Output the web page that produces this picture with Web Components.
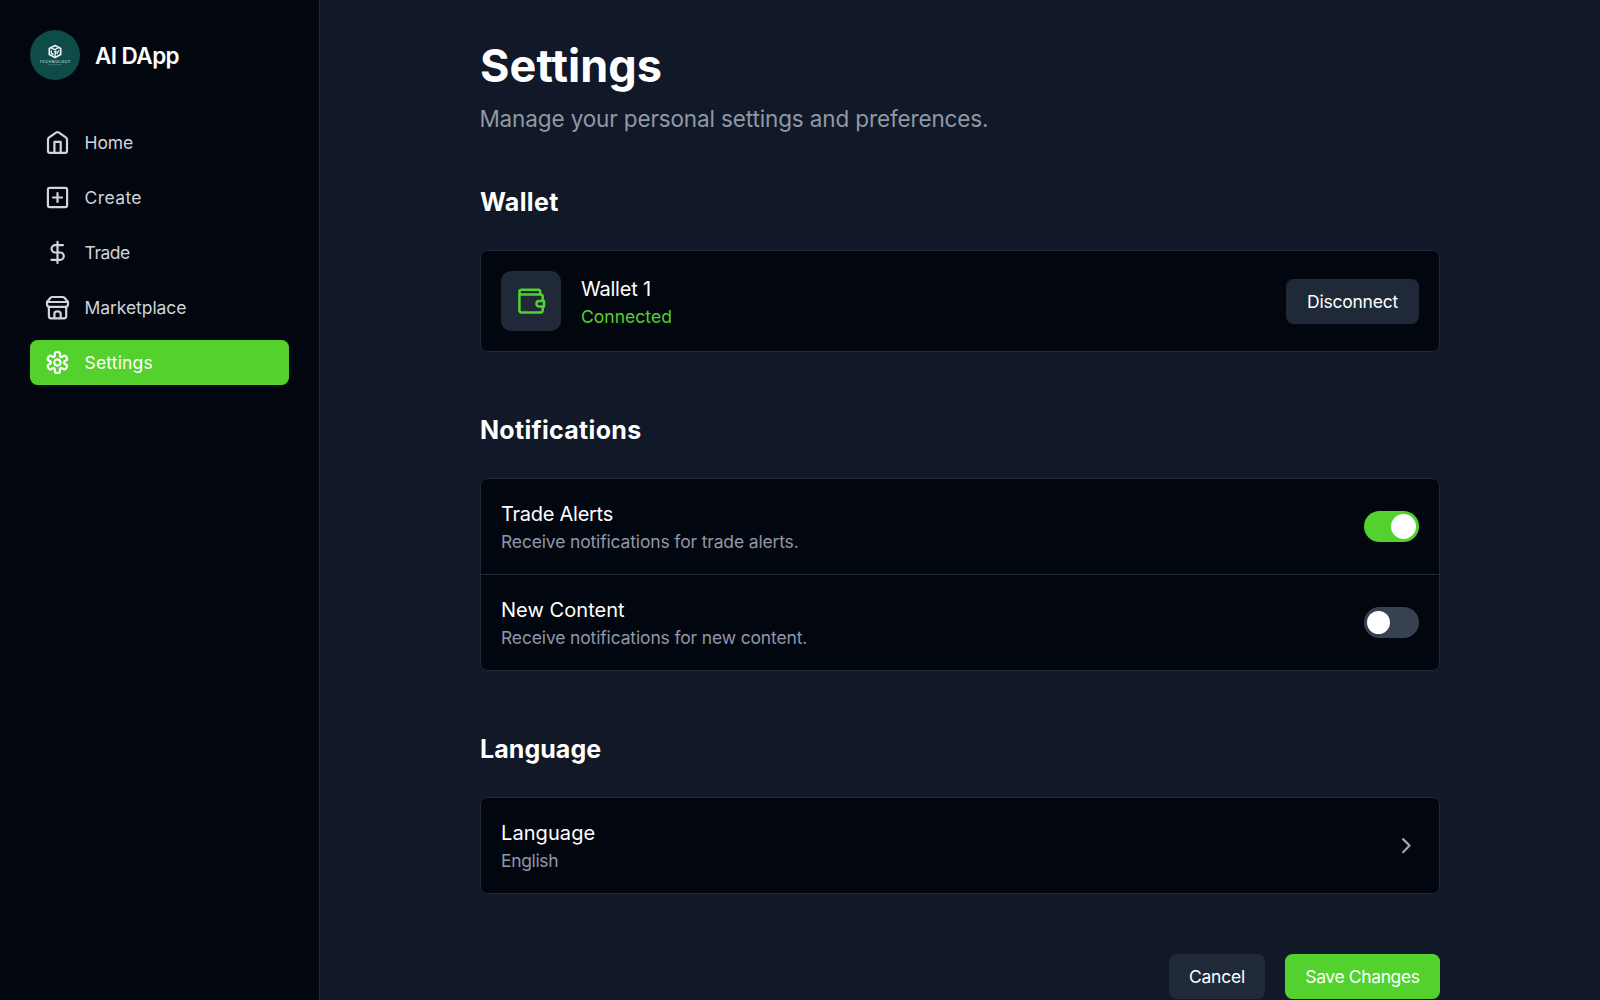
<!DOCTYPE html>
<html lang="en">
<head>
<meta charset="utf-8">
<title>AI DApp – Settings</title>
<style>
  html, body { margin: 0; height: 100%; overflow: hidden; background: #111827; }
  body { font-family: Inter, "Liberation Sans", sans-serif; color: #fff; --green: #53d22d; --panel: #02060f; --line: #1f2937; }
</style>
</head>
<body>
<app-shell>
  <side-bar slot="nav">
    <app-brand slot="brand"><ui-text size="22.5" weight="600" ls="-0.57">AI DApp</ui-text></app-brand>
    <nav-item icon="home"><ui-text size="17.5" ls="-0.17">Home</ui-text></nav-item>
    <nav-item icon="create"><ui-text size="17.5" ls="0.38">Create</ui-text></nav-item>
    <nav-item icon="trade"><ui-text size="17.5" ls="-0.5">Trade</ui-text></nav-item>
    <nav-item icon="store"><ui-text size="17.5" ls="-0.08">Marketplace</ui-text></nav-item>
    <nav-item icon="gear" active><ui-text size="17.5" ls="0.16">Settings</ui-text></nav-item>
  </side-bar>

  <page-header>
    <ui-text slot="title" size="45" weight="700" ls="0.08">Settings</ui-text>
    <ui-text slot="lead" size="22.5" weight="400" ls="-0.13">Manage your personal settings and preferences.</ui-text>
  </page-header>

  <settings-section>
    <ui-text slot="heading" size="25" weight="700" ls="0.35">Wallet</ui-text>
    <setting-row style="--row-h:100px">
      <icon-tile slot="lead"></icon-tile>
      <ui-text slot="title" size="20" weight="430" ls="-0.22">Wallet 1</ui-text>
      <ui-text slot="note" size="17.5" ls="0.03" color="var(--green)">Connected</ui-text>
      <ui-button slot="action" style="--w:133px"><ui-text size="17.5" weight="430" ls="-0.22">Disconnect</ui-text></ui-button>
    </setting-row>
  </settings-section>

  <settings-section>
    <ui-text slot="heading" size="25" weight="700" ls="0.3">Notifications</ui-text>
    <setting-row style="--row-h:95px">
      <ui-text slot="title" size="20" weight="430" ls="-0.26">Trade Alerts</ui-text>
      <ui-text slot="note" size="17.5" ls="-0.155">Receive notifications for trade alerts.</ui-text>
      <toggle-switch slot="action" on></toggle-switch>
    </setting-row>
    <setting-row style="--row-h:95px">
      <ui-text slot="title" size="20" weight="430" ls="0.05">New Content</ui-text>
      <ui-text slot="note" size="17.5" ls="-0.15">Receive notifications for new content.</ui-text>
      <toggle-switch slot="action"></toggle-switch>
    </setting-row>
  </settings-section>

  <settings-section>
    <ui-text slot="heading" size="25" weight="700" ls="0.06">Language</ui-text>
    <setting-row style="--row-h:95px">
      <ui-text slot="title" size="20" weight="430" ls="0.08">Language</ui-text>
      <ui-text slot="note" size="17.5" ls="-0.35">English</ui-text>
      <ui-icon slot="action" name="chevron" style="--size:25px;color:#9ca3af"></ui-icon>
    </setting-row>
  </settings-section>

  <action-bar>
    <ui-button style="--w:96px"><ui-text size="17.5" weight="430" ls="-0.2">Cancel</ui-text></ui-button>
    <ui-button primary style="--w:155px"><ui-text size="17.5" weight="430" ls="-0.38">Save Changes</ui-text></ui-button>
  </action-bar>
</app-shell>

<script>
function define(name, html, setup) {
  const tpl = document.createElement('template');
  tpl.innerHTML = html;
  customElements.define(name, class extends HTMLElement {
    constructor() {
      super();
      this.attachShadow({ mode: 'open' }).append(tpl.content.cloneNode(true));
    }
    connectedCallback() { if (setup) setup(this, this.shadowRoot); }
  });
}

/* Six-lobed cog outline, rotated from one lobe around (cx, cy). */
function cog(cx, cy) {
  const at = (x, y, k) => {
    const a = k * Math.PI / 3, c = Math.cos(a), s = Math.sin(a);
    return (cx + x * c - y * s).toFixed(2) + ' ' + (cy + x * s + y * c).toFixed(2);
  };
  let d = 'M' + at(-2.6, -7, 0);
  for (let k = 0; k < 6; k++) {
    d += 'L' + at(-2.6, -8.4, k) + 'Q' + at(-2.5, -10.5, k) + ' ' + at(-0.5, -10.5, k) +
         'L' + at(0.5, -10.5, k) + 'Q' + at(2.5, -10.5, k) + ' ' + at(2.6, -8.4, k) +
         'L' + at(2.6, -7, k) + 'Q' + at(2.75, -4.8, k) + ' ' + at(-2.6, -7, k + 1);
  }
  return d + 'Z';
}

const ICONS = {
  home: '<path d="M3 9.4Q3 8.3 3.9 7.6L11.4 2.4Q12.5 1.7 13.6 2.4L21.1 7.6Q22 8.3 22 9.4V20.9Q22 22.8 20.1 22.8H4.9Q3 22.8 3 20.9Z"/><path d="M9.4 22.6V11.9H15.7V22.6"/>',
  create: '<rect x="2.9" y="2.9" width="19.2" height="19.2" rx="1.8"/><path d="M12.5 8v9M8 12.5h9"/>',
  trade: '<path d="M12.5 1.9V23.1M17.9 5.2H10.2a3.65 3.65 0 0 0 0 7.3h4.9a3.65 3.65 0 0 1 0 7.3H6.4"/>',
  store: '<path d="M2 7L5.5 2.8Q6.2 2 7.3 2H17.7Q18.8 2 19.5 2.8L23 7"/><path d="M2 7H23V9.3Q23 11.8 20.5 11.8H4.5Q2 11.8 2 9.3Z"/><path d="M3.9 12V21.3Q3.9 23.3 5.9 23.3H19.2Q21.2 23.3 21.2 21.3V12"/><path d="M9.4 23V18.8Q9.4 16.3 12.5 16.3T15.7 18.8V23"/>',
  gear: '<path d="' + cog(12.4, 12.5) + '"/><circle cx="12.4" cy="12.5" r="3.2"/>',
  chevron: '<path d="M9.1 6.1L15.6 12.6L9.1 19.2"/>'
};

define('ui-icon', `
  <style>
    :host { display: block; flex: none; width: var(--size, 25px); height: var(--size, 25px); }
    svg { display: block; width: 100%; height: 100%; fill: none; stroke: currentColor;
          stroke-width: 2.2; stroke-linecap: round; stroke-linejoin: round; }
  </style>
  <svg viewBox="0 0 25 25"></svg>`,
  (el, root) => { root.querySelector('svg').innerHTML = ICONS[el.getAttribute('name')] || ''; });

define('ui-text', `
  <style>:host { display: block; white-space: nowrap; line-height: inherit; }</style><slot></slot>`,
  el => {
    el.style.fontSize = el.getAttribute('size') + 'px';
    el.style.fontWeight = el.getAttribute('weight') || 400;
    el.style.letterSpacing = el.getAttribute('ls') + 'px';
    if (el.hasAttribute('color')) el.style.color = el.getAttribute('color');
  });

define('app-shell', `
  <style>
    :host { display: flex; width: 100%; height: 1000px; background: #111827; overflow: hidden; }
    main { flex: 1; display: flex; flex-direction: column; align-items: center; padding-top: 41px; }
    .column { width: 960px; display: flex; flex-direction: column; }
  </style>
  <slot name="nav"></slot>
  <main><div class="column"><slot></slot></div></main>`);

define('side-bar', `
  <style>
    :host { display: flex; flex-direction: column; box-sizing: border-box; width: 320px; flex: none;
            height: 100%; padding: 30px; gap: 40px; background: var(--panel); border-right: 1px solid var(--line); }
    nav { display: flex; flex-direction: column; gap: 10px; }
  </style>
  <slot name="brand"></slot>
  <nav><slot></slot></nav>`);

define('app-brand', `
  <style>
    :host { display: flex; align-items: center; gap: 15px; height: 50px; line-height: 50px; }
    svg { display: block; width: 50px; height: 50px; flex: none; }
    .name { padding-top: 1px; }
  </style>
  <svg viewBox="0 0 50 50">
    <circle cx="25" cy="25" r="25" fill="#0f4b49"/>
    <g fill="none" stroke="#e9f3f1" stroke-width="1.3" stroke-linejoin="round" stroke-linecap="round">
      <path d="M25 15.5L30.7 18.5V24.4L25 27.6L19.3 24.4V18.5Z" stroke-width="1.7"/>
      <path d="M21.8 18.4L25 19.6L27.8 18M21.4 20.8V23.4L23.2 24.4M28.6 20.8L27 23.6M25.2 23V27"/>
    </g>
    <circle cx="25.4" cy="21.8" r="1.3" fill="#e9f3f1"/>
    <text x="25.200" y="33" text-anchor="middle" font-family="Inter, sans-serif" font-size="3.500" font-weight="500" letter-spacing="0.720" fill="#d3e3e0">TECHNOLOGY</text>
    <path d="M18.500 34.700H31.500" stroke="#6f9996" stroke-width=".8" stroke-dasharray="1 .5"/>
  </svg>
  <div class="name"><slot></slot></div>`);

define('nav-item', `
  <style>
    :host { display: flex; align-items: center; box-sizing: border-box; height: 45px; padding: 0 15px; gap: 14.6px;
            border-radius: 7.5px; color: #d1d5db; line-height: 45px; }
    :host([active]) { background: var(--green); color: #fff; }
  </style>
  <div class="icon"></div><slot></slot>`,
  (el, root) => {
    const icon = document.createElement('ui-icon');
    icon.setAttribute('name', el.getAttribute('icon'));
    root.querySelector('.icon').replaceChildren(icon);
  });

define('page-header', `
  <style>
    :host { display: flex; flex-direction: column; margin-bottom: 53px; }
    .title { line-height: 50px; height: 50px; }
    .lead { line-height: 28px; height: 28px; margin: 14px 0 0 -0.6px; color: #9098a6; }
  </style>
  <div class="title"><slot name="title"></slot></div>
  <div class="lead"><slot name="lead"></slot></div>`);

define('settings-section', `
  <style>
    :host { display: flex; flex-direction: column; margin-bottom: 62px; }
    .heading { line-height: 32px; height: 32px; margin-bottom: 32px; }
    .card { border: 1px solid var(--line); border-radius: 7.5px; background: var(--panel); overflow: hidden; }
    ::slotted(setting-row:not(:last-child)) { border-bottom: 1px solid var(--line); }
  </style>
  <div class="heading"><slot name="heading"></slot></div>
  <div class="card"><slot></slot></div>`);

define('setting-row', `
  <style>
    :host { display: flex; align-items: center; height: var(--row-h); padding: 0 20px; gap: 20px; }
    .copy { flex: 1; padding-top: 3px; }
    .title, .note { line-height: 27px; height: 27px; }
    .note { color: #9098a6; }
    ::slotted([slot="lead"]) { flex: none; }
  </style>
  <slot name="lead"></slot>
  <div class="copy">
    <div class="title"><slot name="title"></slot></div>
    <div class="note"><slot name="note"></slot></div>
  </div>
  <slot name="action"></slot>`);

define('icon-tile', `
  <style>
    :host { display: grid; place-items: center; width: 60px; height: 60px; border-radius: 10px; background: #1f2937; }
    svg { display: block; width: 30px; height: 30px; fill: none; stroke: var(--green); stroke-width: 2.5;
          stroke-linejoin: round; stroke-linecap: round; }
  </style>
  <svg viewBox="0 0 30 30">
    <path d="M24.200 8.300V5.700Q24.200 3.700 22.200 3.700H5.500Q3.400 3.700 3.400 5.800V24.300Q3.400 26.500 5.600 26.500H24.500Q26.700 26.500 26.700 24.300V20.700M3.600 6.500Q3.900 8.600 5.600 8.600H24.500Q26.700 8.600 26.700 10.800V14.700"/>
    <path d="M28 14.900H22.900Q20.500 14.900 20.500 17.700T22.900 20.500H28Z"/>
  </svg>`);

define('toggle-switch', `
  <style>
    :host { display: flex; align-items: center; box-sizing: border-box; width: 55px; height: 30.5px; padding: 0 3px;
            border-radius: 16px; background: #374151; margin-right: 0.3px; }
    i { display: block; width: 23.5px; height: 23.5px; border-radius: 50%; background: #fff; }
    :host([on]) { background: var(--green); justify-content: flex-end; padding: 0 2.5px; }
    :host([on]) i { width: 25.5px; height: 25.5px; }
  </style><i></i>`);

define('ui-button', `
  <style>
    :host { display: flex; align-items: center; justify-content: center; width: var(--w); height: 45px; flex: none;
            line-height: 45px; border-radius: 7.5px; background: #1f2937; color: #fff; }
    :host([primary]) { background: var(--green); }
  </style><slot></slot>`);

define('action-bar', `
  <style>:host { display: flex; justify-content: flex-end; gap: 20px; margin-top: -2px; }</style><slot></slot>`);
</script>
</body>
</html>
